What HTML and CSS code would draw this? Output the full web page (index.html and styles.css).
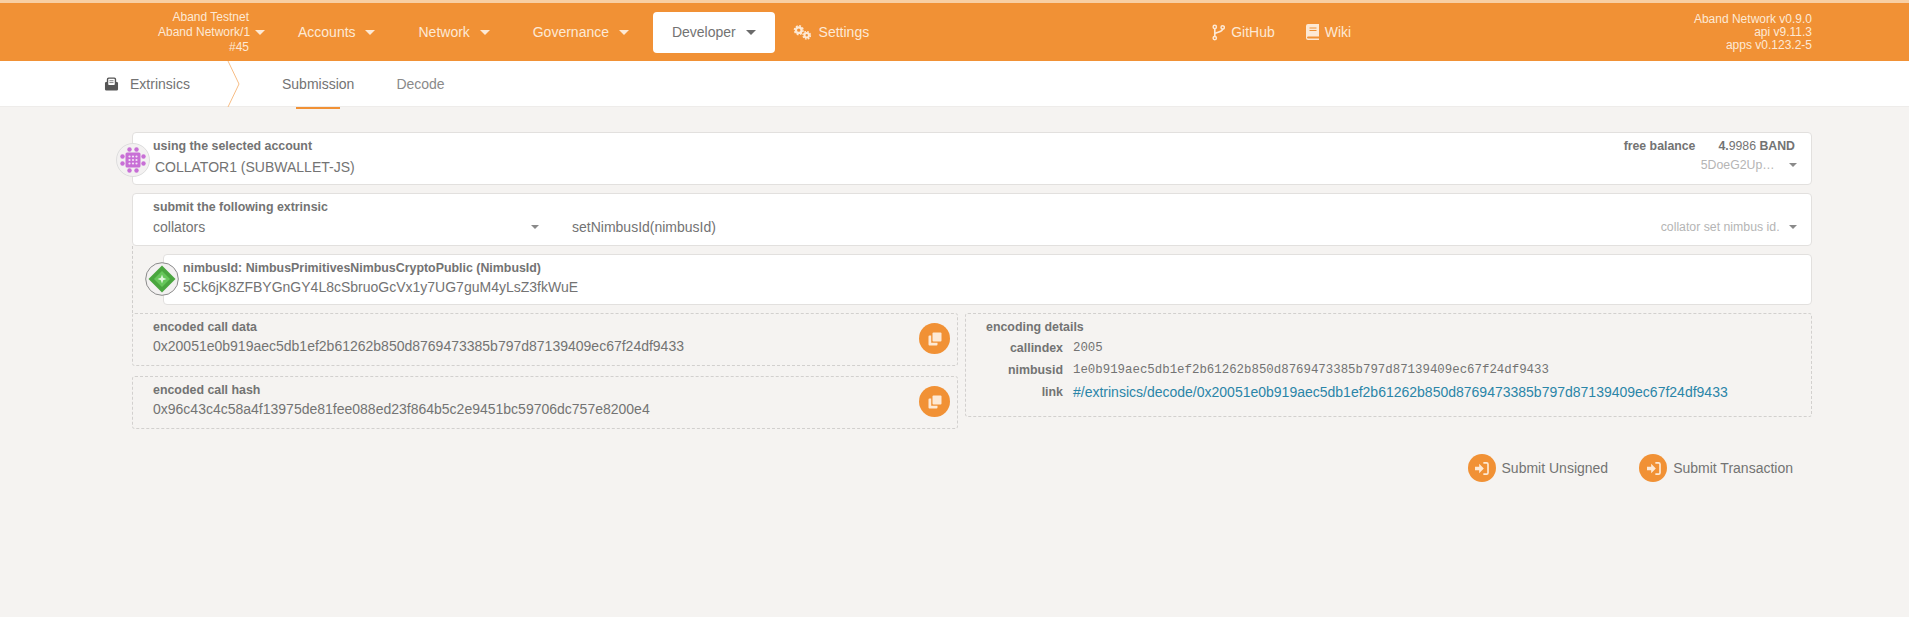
FILE: index.html
```html
<!DOCTYPE html>
<html lang="en">
<head>
    <meta charset="UTF-8">
    <title>Extrinsics</title>
    <link rel="stylesheet" href="styles.css">
</head>
<body>
    <nav class="menu">
        <div class="chain">
            <div class="chain-text">
                <div>Aband Testnet</div>
                <div>Aband Network/1</div>
                <div>#45</div>
            </div>
            <span class="caret"></span>
        </div>
        <a class="menu-item">Accounts <span class="caret"></span></a>
        <a class="menu-item">Network <span class="caret"></span></a>
        <a class="menu-item">Governance <span class="caret"></span></a>
        <a class="menu-item active">Developer <span class="caret"></span></a>
        <a class="menu-item settings">
            <svg class="icon-gears" viewBox="0 0 20 16" width="19" height="15">
                <circle cx="6" cy="5.5" r="3" fill="none" stroke="#fde9d5" stroke-width="2.4"/>
                <circle cx="6" cy="5.5" r="4.6" fill="none" stroke="#fde9d5" stroke-width="1.6" stroke-dasharray="2 1.6"/>
                <circle cx="14.5" cy="11" r="2.4" fill="none" stroke="#fde9d5" stroke-width="2.2"/>
                <circle cx="14.5" cy="11" r="4" fill="none" stroke="#fde9d5" stroke-width="1.4" stroke-dasharray="1.8 1.35"/>
            </svg>
            Settings
        </a>
        <div class="external">
            <a class="menu-link">
                <svg viewBox="0 0 14 18" width="13" height="17">
                    <circle cx="3" cy="3" r="1.8" fill="none" stroke="#fde9d5" stroke-width="1.6"/>
                    <circle cx="3" cy="15" r="1.8" fill="none" stroke="#fde9d5" stroke-width="1.6"/>
                    <circle cx="11.5" cy="3.5" r="1.8" fill="none" stroke="#fde9d5" stroke-width="1.6"/>
                    <path d="M3 5v8M3 11c0-3 8.500-1.500 8.500-6" fill="none" stroke="#fde9d5" stroke-width="1.800"/>
                </svg>
                GitHub
            </a>
            <a class="menu-link">
                <svg viewBox="0 0 13 16" width="13" height="16">
                    <path d="M2 0h11v12.500H2.300c-1.700 0-1.700 2 0 2H13V16H2a2 2 0 0 1-2-2V2a2 2 0 0 1 2-2z" fill="#fde9d5"/>
                    <path d="M3.500 4h7M3.500 6.500h7" stroke="#f19135" stroke-width="1.200"/>
                </svg>
                Wiki
            </a>
        </div>
        <div class="versions">
            <div>Aband Network v0.9.0</div>
            <div>api v9.11.3</div>
            <div>apps v0.123.2-5</div>
        </div>
    </nav>

    <div class="submenu">
        <div class="section-name">
            <svg viewBox="0 0 16 15" width="15" height="14">
                <path d="M1 6 3 5V2.500A2 2 0 0 1 5 .5h6a2 2 0 0 1 2 2V5l2 1v7a1.500 1.500 0 0 1-1.500 1.500h-11A1.500 1.500 0 0 1 1 13z" fill="#555"/>
                <rect x="4.500" y="2" width="7" height="6.500" rx=".8" fill="#fff"/>
                <path d="M5.800 4h4.400M5.800 6h4.400" stroke="#777" stroke-width="1"/>
            </svg>
            Extrinsics
            <svg class="chevron" viewBox="0 0 13 46" width="13" height="46">
                <path d="M1 0 12 23 1 46" fill="none" stroke="#f7bd85" stroke-width="1"/>
            </svg>
        </div>
        <a class="tab current">Submission</a>
        <a class="tab">Decode</a>
    </div>

    <main class="content">
        <div class="card account">
            <svg class="identicon" viewBox="0 0 34 34" width="34" height="34">
                <circle cx="17" cy="17" r="16.500" fill="#f3f1f1" stroke="#ddd"/>
                <g fill="#c86fd6">
                    <circle cx="13.500" cy="6.500" r="2.200"/><circle cx="20.500" cy="6.500" r="2.200"/>
                    <circle cx="6.500" cy="13.500" r="2.200"/><circle cx="6.500" cy="20.500" r="2.200"/>
                    <circle cx="27.500" cy="13.500" r="2.200"/><circle cx="27.500" cy="20.500" r="2.200"/>
                    <circle cx="13.500" cy="27.500" r="2.200"/><circle cx="20.500" cy="27.500" r="2.200"/>
                    <rect x="9.500" y="9.500" width="15" height="15" rx="1.500"/>
                </g>
                <g fill="#f3e3f6">
                    <circle cx="13.500" cy="13.500" r="1.100"/><circle cx="17" cy="13.500" r="1.100"/><circle cx="20.500" cy="13.500" r="1.100"/>
                    <circle cx="13.500" cy="17" r="1.100"/><circle cx="17" cy="17" r="1.100"/><circle cx="20.500" cy="17" r="1.100"/>
                    <circle cx="13.500" cy="20.500" r="1.100"/><circle cx="17" cy="20.500" r="1.100"/><circle cx="20.500" cy="20.500" r="1.100"/>
                </g>
            </svg>
            <div class="field grow">
                <div class="label">using the selected account</div>
                <div class="value name">COLLATOR1 (SUBWALLET-JS)</div>
            </div>
            <div class="account-side">
                <div class="balance"><b>free balance</b><span class="amount"><b>4.</b>9986 <b>BAND</b></span></div>
                <div class="muted">5DoeG2Up… <span class="caret dark"></span></div>
            </div>
        </div>

        <div class="card extrinsic">
            <div class="field pallet">
                <div class="label">submit the following extrinsic</div>
                <div class="value">collators <span class="caret dark"></span></div>
            </div>
            <div class="value method">setNimbusId(nimbusId)</div>
            <div class="muted method-doc">collator set nimbus id. <span class="caret dark"></span></div>
        </div>

        <div class="params">
            <div class="card param">
                <svg class="identicon" viewBox="0 0 34 34" width="34" height="34">
                    <circle cx="17" cy="17" r="16.300" fill="#f3f1f1" stroke="#8a8a8a"/>
                    <path d="M17 3.500 30.500 17 17 30.500 3.500 17z" fill="#4aa63f"/>
                    <path d="M17 9 25 17 17 25 9 17z" fill="#66c65a"/>
                    <path d="M17 12.500 18.200 15.800 21.500 17 18.200 18.200 17 21.500 15.800 18.200 12.500 17 15.800 15.800z" fill="#dff5da"/>
                </svg>
                <div class="label">nimbusId: NimbusPrimitivesNimbusCryptoPublic (NimbusId)</div>
                <div class="value">5Ck6jK8ZFBYGnGY4L8cSbruoGcVx1y7UG7guM4yLsZ3fkWuE</div>
            </div>
        </div>

        <div class="encoded">
            <div class="encoded-left">
                <div class="dashed call">
                    <div class="label">encoded call data</div>
                    <div class="value">0x20051e0b919aec5db1ef2b61262b850d8769473385b797d87139409ec67f24df9433</div>
                    <span class="copy">
                        <svg viewBox="0 0 14 14" width="14" height="14">
                            <rect x="4.500" y="0.500" width="9" height="9" rx="1" fill="#fde9d5"/>
                            <path d="M3.200 3.500H1.500a1 1 0 0 0-1 1v8a1 1 0 0 0 1 1h7a1 1 0 0 0 1-1v-1.700H3.200z" fill="#fde9d5"/>
                        </svg>
                    </span>
                </div>
                <div class="dashed call">
                    <div class="label">encoded call hash</div>
                    <div class="value">0x96c43c4c58a4f13975de81fee088ed23f864b5c2e9451bc59706dc757e8200e4</div>
                    <span class="copy">
                        <svg viewBox="0 0 14 14" width="14" height="14">
                            <rect x="4.500" y="0.500" width="9" height="9" rx="1" fill="#fde9d5"/>
                            <path d="M3.200 3.500H1.500a1 1 0 0 0-1 1v8a1 1 0 0 0 1 1h7a1 1 0 0 0 1-1v-1.700H3.200z" fill="#fde9d5"/>
                        </svg>
                    </span>
                </div>
            </div>
            <div class="dashed details">
                <div class="label">encoding details</div>
                <div class="detail-row"><b>callindex</b><code>2005</code></div>
                <div class="detail-row"><b>nimbusid</b><code>1e0b919aec5db1ef2b61262b850d8769473385b797d87139409ec67f24df9433</code></div>
                <div class="detail-row"><b>link</b><a>#/extrinsics/decode/0x20051e0b919aec5db1ef2b61262b850d8769473385b797d87139409ec67f24df9433</a></div>
            </div>
        </div>

        <div class="actions">
            <a class="submit">
                <span class="round">
                    <svg viewBox="0 0 16 14" width="15" height="13">
                        <path d="M1 5h4.500V2l5 5-5 5V9H1z" fill="#fde9d5"/>
                        <path d="M10 1h3.500a1.500 1.500 0 0 1 1.500 1.500v9a1.500 1.500 0 0 1-1.500 1.500H10" fill="none" stroke="#fde9d5" stroke-width="1.800"/>
                    </svg>
                </span>
                Submit Unsigned
            </a>
            <a class="submit">
                <span class="round">
                    <svg viewBox="0 0 16 14" width="15" height="13">
                        <path d="M1 5h4.500V2l5 5-5 5V9H1z" fill="#fde9d5"/>
                        <path d="M10 1h3.500a1.500 1.500 0 0 1 1.500 1.500v9a1.500 1.500 0 0 1-1.500 1.500H10" fill="none" stroke="#fde9d5" stroke-width="1.800"/>
                    </svg>
                </span>
                Submit Transaction
            </a>
        </div>
    </main>
</body>
</html>
```

FILE: styles.css
```css
* {
    box-sizing: border-box;
}

body {
    font-family: "Liberation Sans", Arial, sans-serif;
    font-size: 14px;
    margin: 0;
    background-color: #f5f3f1;
    color: #737373;
    overflow: hidden;
    height: 617px;
}

.caret {
    display: inline-block;
    width: 0;
    height: 0;
    border-left: 5px solid transparent;
    border-right: 5px solid transparent;
    border-top: 5px solid #fde9d5;
    vertical-align: 2px;
    margin-left: 6px;
}

.caret.dark {
    border-left-width: 4px;
    border-right-width: 4px;
    border-top: 4px solid #8a8a8a;
}

/* top bar */
.menu {
    display: flex;
    align-items: center;
    height: 61px;
    padding-left: 158px;
    background-color: #f19135;
    border-top: 3px solid #f8cfa4;
    color: #fde9d5;
}

.chain {
    display: flex;
    align-items: center;
    width: 121px;
    font-size: 12px;
    line-height: 15px;
}

.chain-text {
    text-align: right;
    width: 91px;
    white-space: nowrap;
}

.menu-item {
    display: block;
    height: 41px;
    line-height: 41px;
    padding: 0 19px;
    margin-right: 5px;
    border-radius: 4px;
}

.menu-item.active {
    background-color: #fff;
    color: #737373;
}

.menu-item.active .caret {
    border-top-color: #6b6b6b;
}

.menu-item.settings {
    margin-left: -6px;
    display: flex;
    align-items: center;
    gap: 7px;
}

.external {
    display: flex;
    gap: 31px;
    margin-left: 319px;
}

.menu-link {
    display: flex;
    align-items: center;
    gap: 6px;
}

.versions {
    margin-left: auto;
    padding-right: 97px;
    text-align: right;
    font-size: 12px;
    line-height: 13px;
}

/* second bar */
.submenu {
    display: flex;
    height: 46px;
    background-color: #fff;
    padding-left: 104px;
    border-bottom: 1px solid #eeecea;
}

.section-name {
    display: flex;
    align-items: center;
    gap: 11px;
    width: 178px;
    height: 46px;
    position: relative;
}

.chevron {
    position: absolute;
    left: 123px;
    top: 0;
}

.tab {
    height: 48px;
    padding: 15px 0 0;
    margin-right: 42px;
    color: #8a8a8a;
}

.tab.current {
    color: #737373;
    position: relative;
}

.tab.current::after {
    content: "";
    position: absolute;
    left: 14px;
    right: 14px;
    bottom: 0;
    height: 2px;
    background-color: #f19135;
}

/* form */
.content {
    padding: 25px 97px 0 132px;
}

.card {
    background-color: #fff;
    border: 1px solid #e2e0de;
    border-radius: 4px;
}

.label {
    font-size: 12.4px;
    font-weight: bold;
    line-height: 15px;
    color: #737373;
}

.value {
    line-height: 18px;
}

.muted {
    color: #b5b5b5;
    font-size: 12.3px;
}

.account {
    position: relative;
    display: flex;
    justify-content: space-between;
    height: 53px;
    padding: 6px 14px 0 20px;
}

.identicon {
    position: absolute;
    left: -17px;
    top: 10px;
}

.name {
    margin: 4px 0 0 2px;
}

.account-side {
    text-align: right;
    font-size: 12.3px;
}

.balance {
    line-height: 15px;
    padding-right: 2px;
}

.amount {
    margin-left: 23px;
}

.account-side .muted {
    margin-top: 4px;
}

.account-side .caret {
    margin-left: 11px;
}

.extrinsic {
    position: relative;
    display: flex;
    height: 53px;
    margin-top: 8px;
    padding: 6px 14px 0 20px;
}

.pallet {
    width: 387px;
}

.pallet .value {
    display: flex;
    justify-content: space-between;
    align-items: center;
    margin-top: 3px;
    padding-right: 1px;
}

.method {
    margin: 18px 0 0 32px;
    flex: 1;
}

.method-doc {
    margin-top: 20px;
}

.params {
    margin-top: 0;
    padding: 8px 0 8px 30px;
    border-left: 1px dashed #cfcdcb;
}

.param {
    position: relative;
    height: 51px;
    padding: 6px 0 0 19px;
}

.param .identicon {
    left: -19px;
    top: 7px;
}

.param .value {
    margin-top: 2px;
}

.encoded {
    display: flex;
    gap: 7px;
    align-items: flex-start;
}

.encoded-left {
    display: flex;
    flex-direction: column;
    gap: 10px;
    width: 826px;
}

.dashed {
    border: 1px dashed #d2d0ce;
    border-radius: 3px;
}

.call {
    position: relative;
    height: 53px;
    padding: 6px 0 0 20px;
}

.call .value {
    margin: 2px 0 0 0;
}

.copy {
    position: absolute;
    right: 7px;
    top: 9px;
    width: 31px;
    height: 31px;
    border-radius: 50%;
    background-color: #f19135;
    display: flex;
    align-items: center;
    justify-content: center;
}

.details {
    flex: 1;
    height: 104px;
    padding: 6px 0 0 20px;
}

.detail-row {
    display: flex;
    align-items: center;
    height: 22px;
    font-size: 12.4px;
}

.label + .detail-row {
    margin-top: 2px;
}

.detail-row b {
    width: 92px;
    margin-left: -15px;
    margin-right: 10px;
    text-align: right;
    white-space: nowrap;
}

.detail-row code {
    font-family: "Liberation Mono", monospace;
    font-size: 12.4px;
}

.detail-row a {
    color: #2a85a8;
    font-size: 14px;
}

.actions {
    display: flex;
    justify-content: flex-end;
    gap: 31px;
    margin-top: 25px;
    padding-right: 19px;
}

.submit {
    display: flex;
    align-items: center;
    gap: 6px;
}

.round {
    display: flex;
    align-items: center;
    justify-content: center;
    width: 28px;
    height: 28px;
    border-radius: 50%;
    background-color: #f19135;
}
```
